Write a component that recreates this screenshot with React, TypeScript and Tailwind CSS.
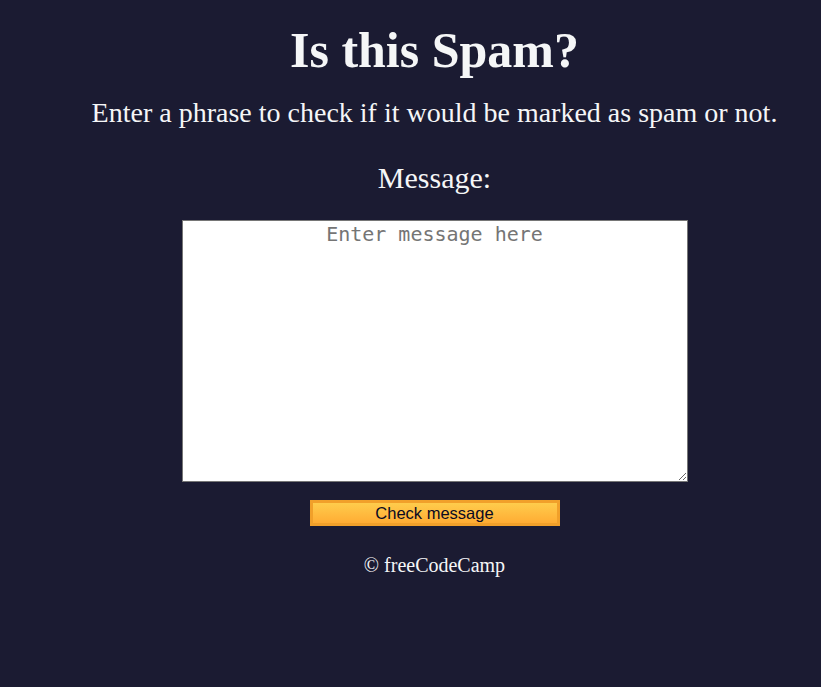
import { useState } from "react";

const serif = { fontFamily: '"Liberation Serif", "Times New Roman", serif' };

export default function App() {
  const [msg, setMsg] = useState("");

  return (
    <div className="min-h-[687px] w-full bg-[#1b1b32] text-[#f5f6f7] pl-12" style={serif}>
      <main className="flex flex-col items-center pt-[21px]">
        <h1 className="text-[50px] font-bold leading-[58px]">Is this Spam?</h1>
        <p className="mt-[17px] text-[28px] leading-[34px]">
          Enter a phrase to check if it would be marked as spam or not.
        </p>
        <label htmlFor="message-input" className="mt-[30px] text-[30px] leading-[36px]">
          Message:
        </label>
        <textarea
          id="message-input"
          value={msg}
          onChange={(e) => setMsg(e.target.value)}
          placeholder="Enter message here"
          className="mt-[24px] w-[506px] h-[262px] bg-white border border-[#767676] text-center text-[20px] leading-[26px] text-[#0a0a23] placeholder:text-[#757575] outline-none"
          style={{ fontFamily: '"DejaVu Sans Mono", monospace' }}
        />
        <button
          type="button"
          className="mt-[18px] w-[250px] h-[26px] border-[3px] border-[#f1a02a] bg-gradient-to-b from-[#fecc4c] to-[#ffac33] text-[16.5px] leading-none text-[#0a0a23]"
          style={{ fontFamily: '"Liberation Sans", Arial, sans-serif' }}
        >
          Check message
        </button>
        <footer className="mt-[27px] text-[20px] leading-[24px]">© freeCodeCamp</footer>
      </main>
    </div>
  );
}
